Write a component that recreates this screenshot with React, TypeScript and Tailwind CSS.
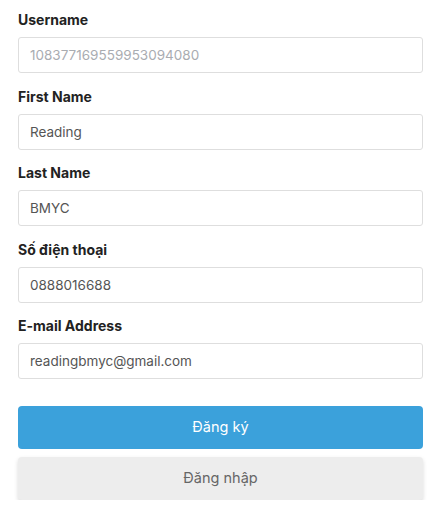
const fields = [
  { label: "Username", value: "108377169559953094080", disabled: true },
  { label: "First Name", value: "Reading" },
  { label: "Last Name", value: "BMYC" },
  { label: "Số điện thoại", value: "0888016688" },
  { label: "E-mail Address", value: "readingbmyc@gmail.com" },
];

export default function App() {
  return (
    <main className="bg-white px-[18px] pt-[10px] font-['Inter',sans-serif]">
      <form className="flex flex-col">
        {fields.map((f) => (
          <div key={f.label} className="mb-[13.5px] flex flex-col">
            <label className="mb-[7px] h-5 text-[14px] font-bold leading-5 text-[#222]">
              {f.label}
            </label>
            <input
              defaultValue={f.value}
              readOnly
              className={
                "h-9 w-full rounded-[3px] border border-[#dedede] bg-white px-[11px] text-[13.5px] outline-none " +
                (f.disabled ? "text-[#a9acb1]" : "text-[#555]")
              }
            />
          </div>
        ))}

        {/* Actions */}
        <button
          type="button"
          className="mt-[13.5px] h-[42.5px] w-full rounded-[4px] bg-[#3ba1db] text-[14.5px] text-white"
        >
          Đăng ký
        </button>
        <button
          type="button"
          className="mt-[8px] h-[43px] w-full rounded-[4px] bg-[#ededed] text-[14.5px] text-[#666] shadow-[0_2px_4px_rgba(0,0,0,0.15)]"
        >
          Đăng nhập
        </button>
      </form>
    </main>
  );
}
